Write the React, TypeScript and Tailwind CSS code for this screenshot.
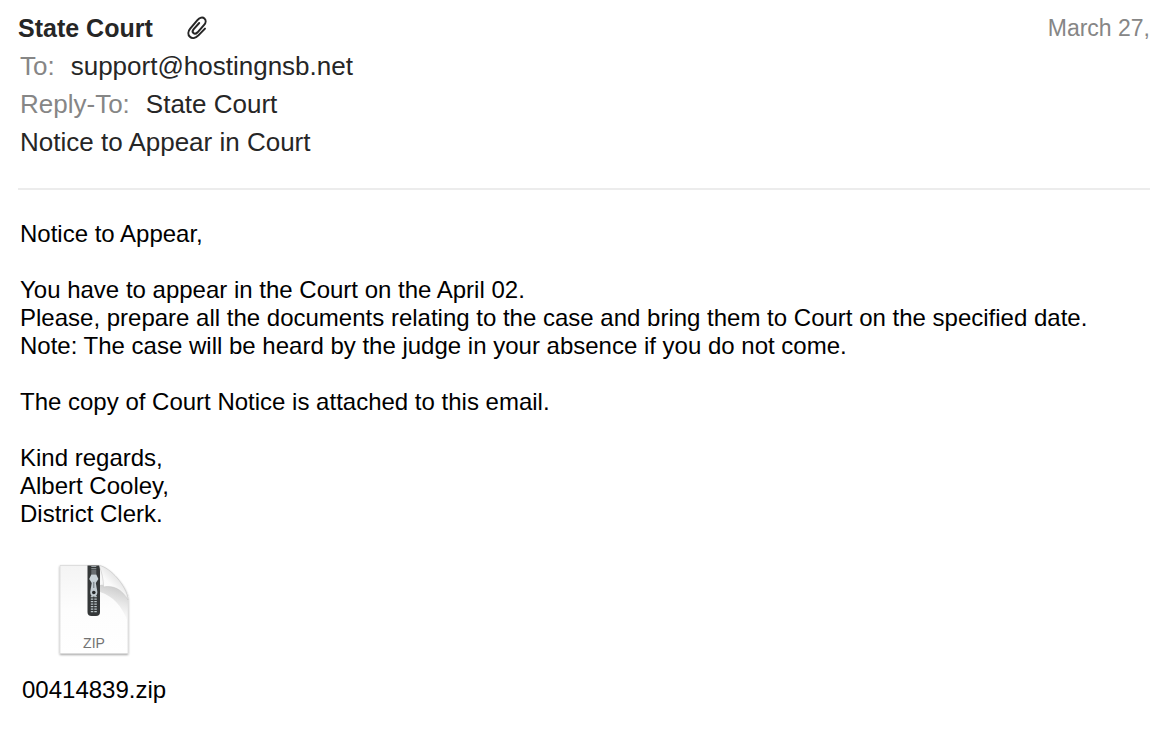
const paragraphs = [
  ['Notice to Appear,'],
  [
    'You have to appear in the Court on the April 02.',
    'Please, prepare all the documents relating to the case and bring them to Court on the specified date.',
    'Note: The case will be heard by the judge in your absence if you do not come.',
  ],
  ['The copy of Court Notice is attached to this email.'],
  ['Kind regards,', 'Albert Cooley,', 'District Clerk.'],
];

const PaperclipIcon = () => (
  <svg viewBox="0 0 20 24" className="w-5 h-6" fill="none" stroke="#262626" strokeWidth="2" strokeLinecap="round" strokeLinejoin="round" aria-hidden="true">
    <path d="M18 12.6 L11.4 19.4 C8.4 22.4 5 22.8 2.9 20.8 C0.7 18.7 0.9 15.4 3.2 12.7 L10.4 4.2 C12.6 1.6 15.6 0.9 17.4 2.4 C19.2 4 19 6.7 17.1 8.9 L10.6 16.3 C9.2 17.8 7.5 18.1 6.4 17.1 C5.3 16.1 5.5 14.5 6.7 13.1 L12.2 7" />
  </svg>
);

const ZipIcon = () => (
  <svg viewBox="0 0 76 96" className="w-[76px] h-24" aria-hidden="true">
    <defs>
      <linearGradient id="page" x1="0" y1="0" x2="0" y2="1">
        <stop offset="0" stopColor="#f4f4f4" />
        <stop offset="0.5" stopColor="#fdfdfd" />
        <stop offset="1" stopColor="#ffffff" />
      </linearGradient>
      <linearGradient id="foldShade" x1="0.55" y1="0" x2="0.3" y2="1">
        <stop offset="0" stopColor="#c8c8c8" />
        <stop offset="0.5" stopColor="#e8e8e8" stopOpacity="0.8" />
        <stop offset="1" stopColor="#f8f8f8" stopOpacity="0" />
      </linearGradient>
      <linearGradient id="fold" x1="0.1" y1="0.9" x2="0.6" y2="0.3">
        <stop offset="0" stopColor="#ffffff" />
        <stop offset="0.6" stopColor="#fafafa" />
        <stop offset="1" stopColor="#e4e4e4" />
      </linearGradient>
      <filter id="pageShadow" x="-10%" y="-10%" width="120%" height="120%">
        <feDropShadow dx="0" dy="1" stdDeviation="1" floodColor="#000" floodOpacity="0.4" />
      </filter>
    </defs>
    <path d="M4 3.5 H43 C53 5 71 24 72 37 V91.5 H4 Z" fill="url(#page)" stroke="#d2d2d2" strokeWidth="0.6" filter="url(#pageShadow)" />
    <path d="M44 23 C54 22 66 26 72 38 V60 C66 44 57 34 44 30 Z" fill="url(#foldShade)" />
    <path d="M43 3.5 C46 10 47.5 18 47.5 25 C57 23 66 27 72 38 C71 24 54 5 43 3.5 Z" fill="url(#fold)" stroke="#c8c8c8" strokeWidth="0.6" />
    <path d="M31.5 3.5 H43 C43.6 5 44 7 44 9 V50 Q44 54 40 54 H35.5 Q31.5 54 31.5 50 Z" fill="#343738" />
    <path d="M37.8 4 V13" stroke="#9ba4a8" strokeWidth="5" strokeDasharray="1 1.2" />
    <path d="M37.8 34 V51" stroke="#b9c3c6" strokeWidth="6" strokeDasharray="1.2 1.3" />
    <path d="M37.8 34 V51" stroke="#343738" strokeWidth="1" />
    <path d="M35.3 12.5 H40.3 L42.4 17 L39.8 21 H35.8 L33.2 17 Z" fill="#c9d3d8" />
    <path d="M36.1 19 H39.5 L41.4 30 Q41.2 34.5 37.8 34.5 Q34.4 34.5 34.2 30 Z" fill="#c3ccd1" />
    <path d="M37.8 20 V26" stroke="#6a7378" strokeWidth="1" />
    <circle cx="37.8" cy="30.5" r="1.8" fill="#252829" />
    <text x="38" y="86" textAnchor="middle" fontSize="14" fill="#737373">ZIP</text>
  </svg>
);

const HeaderField = ({ label, value }: { label: string; value: string }) => (
  <div className="flex gap-4 pl-0.5">
    <dt className="text-[#868686]">{label}</dt>
    <dd>{value}</dd>
  </div>
);

export default function App() {
  return (
    <main className="min-h-screen bg-white pl-[18px] pb-8 font-['Liberation_Sans',sans-serif] text-2xl text-black">
      <header className="border-b-2 border-[#ececec] pt-[9px] pb-[27px] text-[26px] leading-[38px] text-[#262626]">
        <div className="flex items-center justify-between">
          <div className="flex items-center gap-[34px]">
            <h1 className="text-[25px] leading-[38px] font-bold">State Court</h1>
            <PaperclipIcon />
          </div>
          <time className="shrink-0 whitespace-nowrap text-[23px] leading-[38px] text-[#868686]">
            March 27,
          </time>
        </div>
        <dl>
          <HeaderField label="To:" value="support@hostingnsb.net" />
          <HeaderField label="Reply-To:" value="State Court" />
        </dl>
        <h2 className="pl-0.5">Notice to Appear in Court</h2>
      </header>

      <article className="flex flex-col gap-7 pt-[30px] pl-0.5 leading-7">
        {paragraphs.map((lines, i) => (
          <p key={i}>
            {lines.map((line) => (
              <span key={line} className="block">{line}</span>
            ))}
          </p>
        ))}
      </article>

      <a href="#00414839.zip" className="mt-[34px] inline-flex flex-col items-center gap-[18px] pl-1 leading-7">
        <ZipIcon />
        <span>00414839.zip</span>
      </a>
    </main>
  );
}
